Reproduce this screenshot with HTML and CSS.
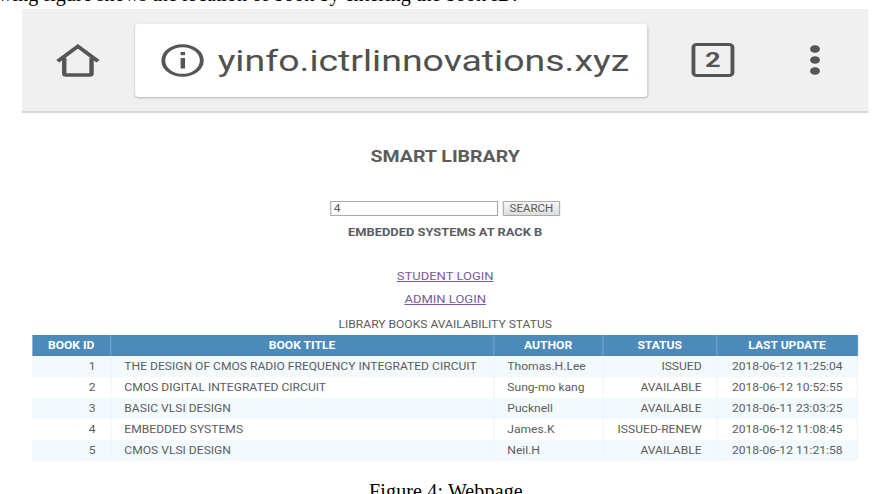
FILE: index.html
```
<!DOCTYPE html>
<html lang="en">
<head>
    <meta charset="UTF-8">
    <meta name="viewport" content="width=device-width, initial-scale=1.0">
    <title>Smart Library</title>
    <link rel="stylesheet" href="styles.css">
</head>
<body>
    <p class="intro">wing figure shows the location of book by entering the book ID.</p>

    <div class="screen">
        <div class="toolbar">
            <svg class="home-icon" width="34" height="36" viewBox="0 0 34 36" fill="none" stroke="#555" stroke-width="3.4">
                <path d="M1.5 19.3 L17 4.3 L32.5 19.3"/>
                <path d="M6.5 16 V31.5 Q6.5 33 8 33 H26 Q27.5 33 27.5 31.5 V16"/>
            </svg>
            <div class="address">
                <svg class="info-icon" width="33" height="33" viewBox="0 0 33 33">
                    <circle cx="16.5" cy="16.5" r="14.8" fill="none" stroke="#555" stroke-width="3"/>
                    <rect x="15" y="8" width="3.4" height="3.2" fill="#555"/>
                    <rect x="15" y="14" width="3.4" height="10.5" fill="#555"/>
                </svg>
                <span class="url">yinfo.ictrlinnovations.xyz</span>
            </div>
            <div class="tabs">2</div>
            <svg class="menu-icon" width="8" height="32" viewBox="0 0 8 32" fill="#555">
                <circle cx="4" cy="5" r="3.8"/>
                <circle cx="4" cy="16" r="3.8"/>
                <circle cx="4" cy="27" r="3.8"/>
            </svg>
        </div>

        <div class="page">
            <h1>SMART LIBRARY</h1>
            <form class="search">
                <input type="text" value="4">
                <button type="button">SEARCH</button>
            </form>
            <p class="result">EMBEDDED SYSTEMS AT RACK B</p>
            <a class="login" href="#">STUDENT LOGIN</a>
            <a class="login" href="#">ADMIN LOGIN</a>

            <table class="books">
                <caption>LIBRARY BOOKS AVAILABILITY STATUS</caption>
                <colgroup>
                    <col class="col-id">
                    <col class="col-title">
                    <col class="col-author">
                    <col class="col-status">
                    <col class="col-update">
                </colgroup>
                <thead>
                    <tr><th>BOOK ID</th><th>BOOK TITLE</th><th>AUTHOR</th><th>STATUS</th><th>LAST UPDATE</th></tr>
                </thead>
                <tbody>
                    <tr><td class="num">1</td><td>THE DESIGN OF CMOS RADIO FREQUENCY INTEGRATED CIRCUIT</td><td>Thomas.H.Lee</td><td class="num">ISSUED</td><td class="num">2018-06-12 11:25:04</td></tr>
                    <tr><td class="num">2</td><td>CMOS DIGITAL INTEGRATED CIRCUIT</td><td>Sung-mo kang</td><td class="num">AVAILABLE</td><td class="num">2018-06-12 10:52:55</td></tr>
                    <tr><td class="num">3</td><td>BASIC VLSI DESIGN</td><td>Pucknell</td><td class="num">AVAILABLE</td><td class="num">2018-06-11 23:03:25</td></tr>
                    <tr><td class="num">4</td><td>EMBEDDED SYSTEMS</td><td>James.K</td><td class="num">ISSUED-RENEW</td><td class="num">2018-06-12 11:08:45</td></tr>
                    <tr><td class="num">5</td><td>CMOS VLSI DESIGN</td><td>Neil.H</td><td class="num">AVAILABLE</td><td class="num">2018-06-12 11:21:58</td></tr>
                </tbody>
            </table>
        </div>
    </div>

    <p class="figure-caption">Figure 4: Webpage</p>
</body>
</html>
```

FILE: styles.css
```
* {
    box-sizing: border-box;
}
body {
    margin: 0;
    height: 494px;
    overflow: hidden;
    background: #fff;
    color: #000;
    font-family: "Liberation Serif", serif;
}
.intro {
    margin: -16px 0 0 -2px;
    height: 25px;
    line-height: 20px;
    font-size: 20px;
    letter-spacing: 0.08px;
    white-space: nowrap;
}
.screen {
    width: 846px;
    height: 464px;
    margin-left: 22px;
    font-family: Roboto, sans-serif;
    color: #5c5c5c;
}
/* the phone screen is stretched sideways */
.toolbar {
    display: flex;
    align-items: center;
    width: 650.8px;
    height: 104px;
    padding: 0 37px 0 26px;
    background: #f0f0f0;
    border-bottom: 2px solid #d8d8d8;
    transform: scaleX(1.3);
    transform-origin: 0 0;
}
.home-icon {
    margin-right: 27px;
}
.address {
    display: flex;
    align-items: center;
    width: 394px;
    height: 73px;
    padding-left: 19.5px;
    background: #fff;
    border-radius: 3px;
    box-shadow: 0 1px 2px rgba(0, 0, 0, 0.25);
}
.url {
    margin-left: 11px;
    padding-top: 2px;
    font-size: 28.8px;
    color: #505050;
    white-space: nowrap;
}
.tabs {
    width: 33px;
    height: 34px;
    margin-left: 34px;
    border: 3.5px solid #555;
    border-radius: 4px;
    color: #555;
    font-size: 21px;
    font-weight: bold;
    line-height: 29px;
    text-align: center;
}
.menu-icon {
    margin-left: auto;
}
.page {
    display: flex;
    flex-direction: column;
    align-items: center;
    width: 735px;
    padding: 33px 8px 0 9px;
    font-size: 11px;
    line-height: 14px;
    transform: scaleX(1.15);
    transform-origin: 0 0;
}
h1 {
    margin: 0;
    font-size: 17px;
    line-height: 20px;
    font-weight: bold;
}
.search {
    display: flex;
    gap: 4px;
    margin-top: 35px;
}
.search input {
    width: 146px;
    height: 15px;
    padding: 0 2px;
    border: 1px solid #aaa;
    font: 10.5px Roboto, sans-serif;
    color: #5c5c5c;
}
.search button {
    width: 50px;
    height: 15px;
    padding: 0;
    border: 1px solid #aaa;
    border-radius: 1px;
    background: linear-gradient(#f6f6f6, #ddd);
    font: 10px Roboto, sans-serif;
    color: #5c5c5c;
}
.result {
    margin: 10px 0 30px;
    font-size: 11.2px;
    font-weight: bold;
}
.login {
    margin-bottom: 9px;
    font-size: 11.3px;
    color: #7a5a9a;
}
.books {
    width: 718px;
    margin-top: 1px;
    border-collapse: collapse;
    table-layout: fixed;
    font-size: 10.5px;
}
.books caption {
    height: 18px;
    line-height: 15px;
    font-size: 10.5px;
}
.col-id {
    width: 68px;
}
.col-title {
    width: 333px;
}
.col-author {
    width: 95px;
}
.col-status {
    width: 99px;
}
.books th,
.books td {
    height: 21px;
    padding: 0 12.5px 0 11.5px;
    text-align: left;
    white-space: nowrap;
    border-right: 1px solid #eef5f9;
}
.books th {
    padding: 0;
    background: #4c8aba;
    border-color: #5c97c3;
    color: #fff;
    text-align: center;
}
.books tbody tr:nth-child(odd) {
    background: #f3fafe;
}
.books .num {
    text-align: right;
}
.figure-caption {
    margin: 8px 0 0 369px;
    font-size: 20px;
    line-height: 20px;
    letter-spacing: 0.15px;
    white-space: nowrap;
}
```
